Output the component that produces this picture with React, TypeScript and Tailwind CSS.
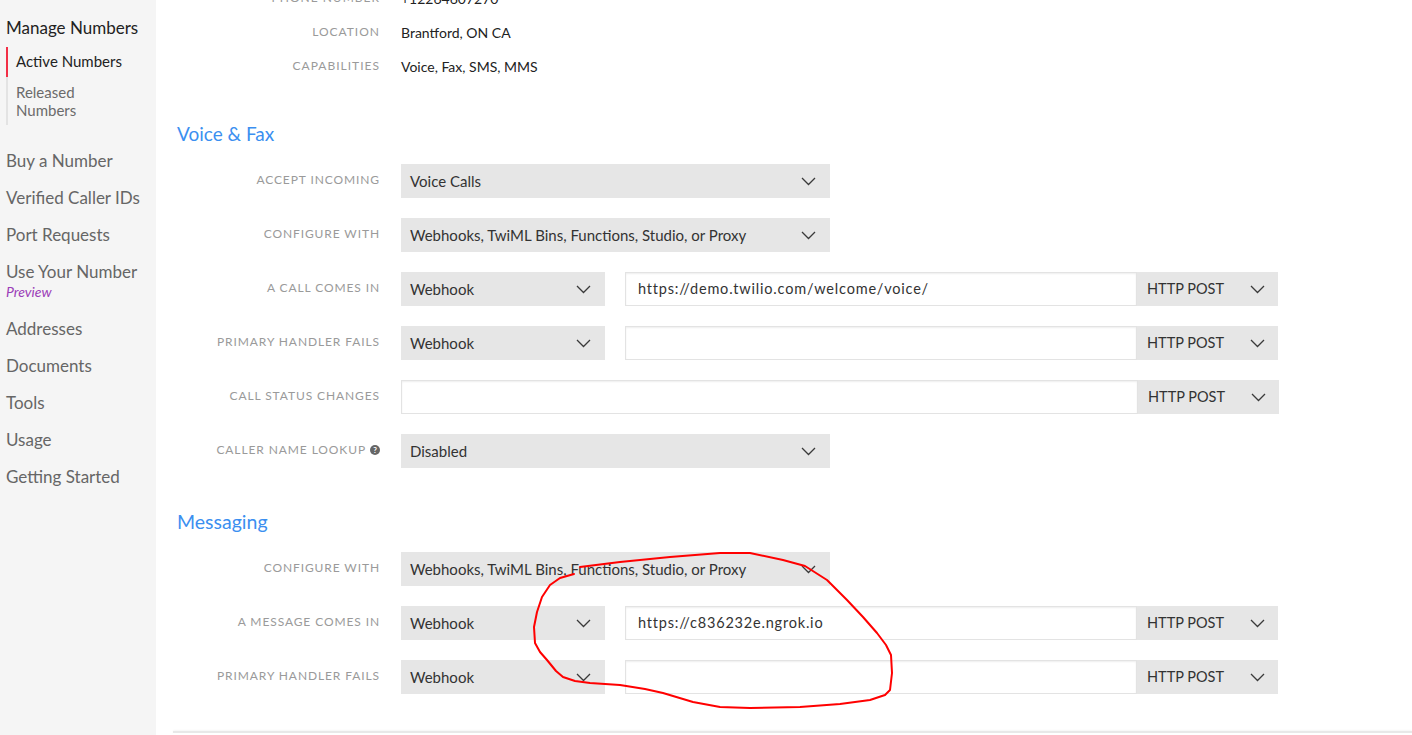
import React from "react";

const Chevron = () => (
  <svg width="15" height="9" viewBox="0 0 15 9" className="shrink-0">
    <polyline points="1,1 7.5,7.5 14,1" fill="none" stroke="#3a3a3a" strokeWidth="1.3" />
  </svg>
);

const Select = ({ text, w }: { text: string; w: string }) => (
  <div className={`${w} h-[34px] shrink-0 bg-[#e6e6e6] flex items-center justify-between pl-[9px] pr-[14px] text-[15px] text-[#333]`}>
    <span>{text}</span>
    <Chevron />
  </div>
);

const Method = () => (
  <div className="w-[141px] h-[34px] shrink-0 bg-[#e6e6e6] flex items-center justify-between pl-[10px] pr-[13px] text-[14.5px] text-[#333]">
    <span>HTTP POST</span>
    <Chevron />
  </div>
);

const Input = ({ value, w }: { value?: string; w: string }) => (
  <div className={`${w} h-[34px] shrink-0 bg-white border border-[#e3e3e3] shadow-[inset_0_1px_2px_rgba(0,0,0,0.07)] flex items-center pl-[12px] text-[14.5px] tracking-[0.8px] text-[#333]`}>
    {value}
  </div>
);

const Label = ({ children }: { children: React.ReactNode }) => (
  <div className="w-[207px] shrink-0 text-right text-[12px] tracking-[0.9px] uppercase text-[#9a9a9a] flex items-center justify-end gap-[4px] pb-[3px]">
    {children}
  </div>
);

const Row = ({ label, children }: { label: React.ReactNode; children: React.ReactNode }) => (
  <div className="flex items-center h-[34px] gap-[21px]">
    <Label>{label}</Label>
    <div className="flex items-center">{children}</div>
  </div>
);

const InfoRow = ({ label, value }: { label: string; value: string }) => (
  <div className="flex items-center h-[34px] gap-[21px]">
    <div className="w-[207px] shrink-0 text-right text-[12px] tracking-[1px] uppercase text-[#9a9a9a]">{label}</div>
    <div className="text-[14px] text-[#222]">{value}</div>
  </div>
);

const WebhookRow = ({ label, url }: { label: string; url?: string }) => (
  <Row label={label}>
    <Select text="Webhook" w="w-[204px]" />
    <div className="w-[20px]" />
    <Input value={url} w="w-[512px]" />
    <Method />
  </Row>
);

const navItems = ["Buy a Number", "Verified Caller IDs", "Port Requests"];
const navItems2 = ["Addresses", "Documents", "Tools", "Usage", "Getting Started"];

const loop = [
  [574, 574], [560, 578], [550, 585], [542, 597], [537, 612], [534, 627], [535, 643], [540, 652],
  [547, 660], [556, 671], [563, 677], [575, 681], [590, 683], [620, 685], [645, 689], [663, 693],
  [693, 702], [720, 707], [750, 708], [800, 707], [840, 704], [870, 700], [885, 695], [890, 690],
  [892, 673], [891, 655], [886, 645], [877, 633], [863, 617], [847, 600], [827, 580], [805, 566],
  [783, 560], [750, 553], [720, 553], [670, 557], [620, 562], [580, 567],
];

export default function App() {
  return (
    <div className="relative w-[1412px] h-[735px] overflow-hidden flex bg-white font-['Lato','Noto_Sans',sans-serif]">
      <aside className="w-[156px] shrink-0 bg-[#f5f5f5] pl-[6px] pt-[17px]">
        <div className="text-[17px] leading-[22px] text-[#222]">Manage Numbers</div>
        <div className="mt-[8px] border-l-2 border-[#e3e3e3]">
          <div className="-ml-[2px] border-l-2 border-[#f22f46] h-[30px] flex items-center pl-[8px] pb-[1px] text-[15px] text-[#222]">
            Active Numbers
          </div>
          <div className="pl-[8px] pt-[6px] pb-[6px] text-[15px] leading-[18px] text-[#6b6b6b]">
            Released
            <br />
            Numbers
          </div>
        </div>
        <div className="mt-[17px] text-[17px] text-[#666]">
          {navItems.map((t) => (
            <div key={t} className="h-[37px] flex items-center">{t}</div>
          ))}
          <div className="pt-[8px] leading-[21px]">Use Your Number</div>
          <div className="text-[14px] italic leading-[19px] text-[#9b3db8] pb-[9px]">Preview</div>
          {navItems2.map((t) => (
            <div key={t} className="h-[37px] flex items-center">{t}</div>
          ))}
        </div>
      </aside>

      <main className="flex-1 pl-[17px] flex flex-col">
        <div className="-mt-[19px]">
          <InfoRow label="Phone Number" value="+12264607270" />
          <InfoRow label="Location" value="Brantford, ON CA" />
          <InfoRow label="Capabilities" value="Voice, Fax, SMS, MMS" />
        </div>

        <h2 className="mt-[39px] pl-[4px] h-[24px] leading-[24px] text-[19px] text-[#3b8ff0]">Voice &amp; Fax</h2>

        <div className="mt-[18px] flex flex-col gap-[20px]">
          <Row label="Accept Incoming">
            <Select text="Voice Calls" w="w-[429px]" />
          </Row>
          <Row label="Configure With">
            <Select text="Webhooks, TwiML Bins, Functions, Studio, or Proxy" w="w-[429px]" />
          </Row>
          <WebhookRow label="A Call Comes In" url="https://demo.twilio.com/welcome/voice/" />
          <WebhookRow label="Primary Handler Fails" />
          <Row label="Call Status Changes">
            <Input w="w-[737px]" />
            <Method />
          </Row>
          <Row
            label={
              <>
                <span>Caller Name Lookup</span>
                <span className="w-[10px] h-[10px] rounded-full bg-[#666] text-white text-[8px] leading-[10px] font-bold flex items-center justify-center tracking-normal">?</span>
              </>
            }
          >
            <Select text="Disabled" w="w-[429px]" />
          </Row>
        </div>

        <h2 className="mt-[42px] pl-[4px] h-[24px] leading-[24px] text-[19.5px] text-[#3b8ff0]">Messaging</h2>

        <div className="mt-[18px] flex flex-col gap-[20px]">
          <Row label="Configure With">
            <Select text="Webhooks, TwiML Bins, Functions, Studio, or Proxy" w="w-[429px]" />
          </Row>
          <WebhookRow label="A Message Comes In" url="https://c836232e.ngrok.io" />
          <WebhookRow label="Primary Handler Fails" />
        </div>

        <div className="mt-[37px] h-[20px] border-t-2 border-[#e8e8e8] shadow-[0_-1px_2px_rgba(0,0,0,0.04)]" />
      </main>

      <svg className="absolute inset-0 pointer-events-none" width="1412" height="735">
        <polyline
          points={loop.map((p) => p.join(",")).join(" ")}
          fill="none"
          stroke="#ff0000"
          strokeWidth="2"
          strokeLinejoin="round"
          strokeLinecap="round"
        />
      </svg>
    </div>
  );
}
